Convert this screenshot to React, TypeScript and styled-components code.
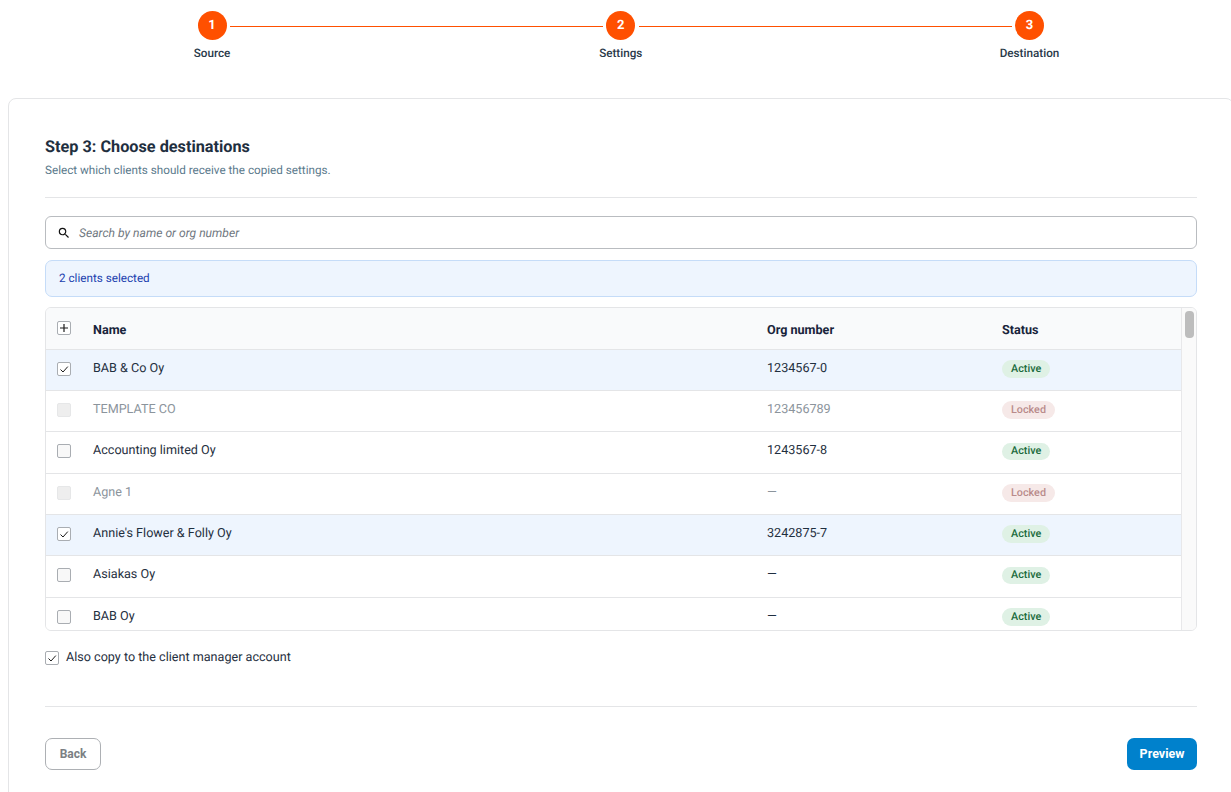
import React from "react";
import { createGlobalStyle, styled } from "styled-components";
import { MdSearch } from "react-icons/md";

const GlobalStyle = createGlobalStyle`
  html, body {
    margin: 0;
    padding: 0;
    background: #fff;
    overflow: hidden;
  }
  body {
    font-family: Roboto, "Liberation Sans", sans-serif;
    color: #1f2d3d;
    text-rendering: geometricPrecision;
    -webkit-font-smoothing: antialiased;
  }
`;

const Page = styled.div`
  width: 1231px;
  height: 792px;
  overflow: hidden;
`;

const Stepper = styled.div`
  display: flex;
  height: 98px;
  padding: 11px 183.5px 0 194px;
  box-sizing: border-box;
`;

const Step = styled.div`
  display: flex;
  flex-direction: column;
  align-items: center;
  width: 36px;
  flex: none;
`;

const StepCircle = styled.div`
  width: 29px;
  height: 29px;
  border-radius: 50%;
  background: #ff5000;
  color: #fff;
  font-size: 13px;
  font-weight: 700;
  display: flex;
  align-items: center;
  justify-content: center;
`;

const StepLabel = styled.div`
  margin-top: 5px;
  font-size: 11.7px;
  line-height: 16px;
  font-weight: 500;
  color: #2a3a4a;
  white-space: nowrap;
`;

const Connector = styled.div`
  flex: 1;
  height: 1px;
  margin-top: 15px;
  background: #ff5000;
`;

const Card = styled.div`
  margin-left: 8px;
  width: 1226px;
  height: 720px;
  box-sizing: border-box;
  border: 1px solid #e4e5e7;
  border-radius: 8px;
  padding: 37px 36px 0;
`;

const Title = styled.h2`
  margin: 0;
  font-size: 16.25px;
  line-height: 22px;
  font-weight: 700;
  color: #1f2f40;
`;

const Subtitle = styled.p`
  margin: 4px 0 0;
  font-size: 11.7px;
  line-height: 16px;
  color: #5b7a8c;
`;

const Divider = styled.hr`
  margin: 0;
  border: 0;
  height: 1px;
  background: #e4e5e7;
`;

const HeaderDivider = styled(Divider)`
  margin-top: 19px;
`;

const SearchBox = styled.div`
  margin-top: 18px;
  height: 33px;
  box-sizing: border-box;
  border: 1px solid #b9bcc0;
  border-radius: 6px;
  display: flex;
  align-items: center;
  gap: 8px;
  padding-left: 11px;
  font-size: 12.1px;
  font-style: italic;
  color: #6f7780;
`;

const SelectedBar = styled.div`
  margin-top: 11px;
  height: 37px;
  box-sizing: border-box;
  border: 1px solid #c5dcf8;
  border-radius: 7px;
  background: #eef5fe;
  display: flex;
  align-items: center;
  padding: 0 0 1px 13px;
  font-size: 11.7px;
  color: #1b3fae;
`;

const TableFrame = styled.div`
  margin-top: 10px;
  height: 324px;
  box-sizing: border-box;
  border: 1px solid #e4e5e7;
  border-radius: 6px;
  display: flex;
  overflow: hidden;
`;

const TableBody = styled.div`
  flex: 1;
  min-width: 0;
  overflow: hidden;
`;

const Row = styled.div<{ $selected?: boolean; $disabled?: boolean }>`
  display: grid;
  grid-template-columns: 47px 674px 235px 1fr;
  height: 41.33px;
  box-sizing: border-box;
  border-bottom: 1px solid #e4e5e7;
  background: ${(p) => (p.$selected ? "#eef5fe" : "#fff")};
  color: ${(p) => (p.$disabled ? "#8b949c" : "#1f2f40")};
  font-size: 12.6px;
  line-height: 16px;
`;

const HeadRow = styled(Row)`
  height: 41.7px;
  background: #f9fafb;
  color: #18233a;
  font-weight: 700;
  line-height: 16px;
`;

const HeadCell = styled.div`
  padding-top: 15px;
`;

const Cell = styled.div`
  padding-top: 11px;
`;

const BadgeCell = styled.div`
  padding-top: 10.4px;
`;

const CheckCell = styled.div`
  padding: 12px 0 0 11px;
`;

const HeadCheckCell = styled(CheckCell)`
  padding-top: 13px;
`;

const Box = styled.span<{ $disabled?: boolean; $empty?: boolean }>`
  display: flex;
  align-items: center;
  justify-content: center;
  width: 14px;
  height: 14px;
  box-sizing: border-box;
  border: 1px solid ${(p) => (p.$disabled ? "#e6e7e8" : "#a9adb2")};
  border-radius: 2px;
  background: ${(p) => (p.$disabled ? "#eeeeee" : p.$empty ? "#f8f8f8" : "#fff")};
  color: #1c1c1c;
`;

const Badge = styled.span<{ $locked?: boolean }>`
  display: inline-flex;
  align-items: center;
  height: 17.5px;
  padding: 0 9px;
  border-radius: 9px;
  font-size: 10.8px;
  font-weight: 500;
  background: ${(p) => (p.$locked ? "#f6e9e8" : "#dff1e5")};
  color: ${(p) => (p.$locked ? "#b98b8b" : "#1a6b3c")};
`;

const ScrollTrack = styled.div`
  flex: none;
  width: 15px;
  box-sizing: border-box;
  background: #fafafa;
  border-left: 1px solid #e8e8ea;
  padding: 3px 2px 0 3px;
`;

const ScrollThumb = styled.div`
  height: 27px;
  border-radius: 4px;
  background: #bdbdbd;
`;

const CopyRow = styled.label`
  margin-top: 19px;
  display: flex;
  align-items: center;
  gap: 7px;
  font-size: 12.6px;
  line-height: 16px;
  color: #1f2f40;
`;

const FooterDivider = styled(Divider)`
  margin-top: 40px;
`;

const Footer = styled.div`
  margin-top: 31px;
  display: flex;
  justify-content: space-between;
`;

const BackButton = styled.button`
  width: 56px;
  height: 32px;
  background: #fff;
  border: 1px solid #adb0b4;
  border-radius: 7px;
  font: 700 12px Roboto, sans-serif;
  color: #7b7f84;
`;

const PreviewButton = styled.button`
  width: 70px;
  height: 32px;
  padding: 0 0 1px;
  background: #0081cc;
  border: 0;
  border-radius: 7px;
  font: 700 12.5px Roboto, sans-serif;
  color: #fff;
`;

const Check = () => (
  <svg width="10" height="10" viewBox="0 0 10 10" fill="none" stroke="currentColor" strokeWidth="1">
    <path d="M1.5 5.5 L4 8 L8.8 2.6" />
  </svg>
);

const Plus = () => (
  <svg width="10" height="10" viewBox="0 0 10 10" fill="none" stroke="currentColor" strokeWidth="1.2">
    <path d="M5 1 V9 M1 5 H9" />
  </svg>
);

const steps = ["Source", "Settings", "Destination"];

const clients = [
  { name: "BAB & Co Oy", org: "1234567-0", selected: true },
  { name: "TEMPLATE CO", org: "123456789", locked: true },
  { name: "Accounting limited Oy", org: "1243567-8" },
  { name: "Agne 1", org: "—", locked: true },
  { name: "Annie's Flower & Folly Oy", org: "3242875-7", selected: true },
  { name: "Asiakas Oy", org: "—" },
  { name: "BAB Oy", org: "—" },
];

export default function App() {
  return (
    <Page>
      <GlobalStyle />
      <Stepper>
        {steps.map((step, i) => (
          <React.Fragment key={step}>
            {i > 0 && <Connector />}
            <Step>
              <StepCircle>{i + 1}</StepCircle>
              <StepLabel>{step}</StepLabel>
            </Step>
          </React.Fragment>
        ))}
      </Stepper>
      <Card>
        <Title>Step 3: Choose destinations</Title>
        <Subtitle>Select which clients should receive the copied settings.</Subtitle>
        <HeaderDivider />
        <SearchBox>
          <MdSearch size={14} color="#111" />
          Search by name or org number
        </SearchBox>
        <SelectedBar>2 clients selected</SelectedBar>
        <TableFrame>
          <TableBody>
            <HeadRow>
              <HeadCheckCell>
                <Box>
                  <Plus />
                </Box>
              </HeadCheckCell>
              <HeadCell>Name</HeadCell>
              <HeadCell>Org number</HeadCell>
              <HeadCell>Status</HeadCell>
            </HeadRow>
            {clients.map((c) => (
              <Row key={c.name} $selected={c.selected} $disabled={c.locked}>
                <CheckCell>
                  <Box $disabled={c.locked} $empty={!c.selected}>
                    {c.selected && <Check />}
                  </Box>
                </CheckCell>
                <Cell>{c.name}</Cell>
                <Cell>{c.org}</Cell>
                <BadgeCell>
                  <Badge $locked={c.locked}>{c.locked ? "Locked" : "Active"}</Badge>
                </BadgeCell>
              </Row>
            ))}
          </TableBody>
          <ScrollTrack>
            <ScrollThumb />
          </ScrollTrack>
        </TableFrame>
        <CopyRow>
          <Box>
            <Check />
          </Box>
          Also copy to the client manager account
        </CopyRow>
        <FooterDivider />
        <Footer>
          <BackButton>Back</BackButton>
          <PreviewButton>Preview</PreviewButton>
        </Footer>
      </Card>
    </Page>
  );
}
